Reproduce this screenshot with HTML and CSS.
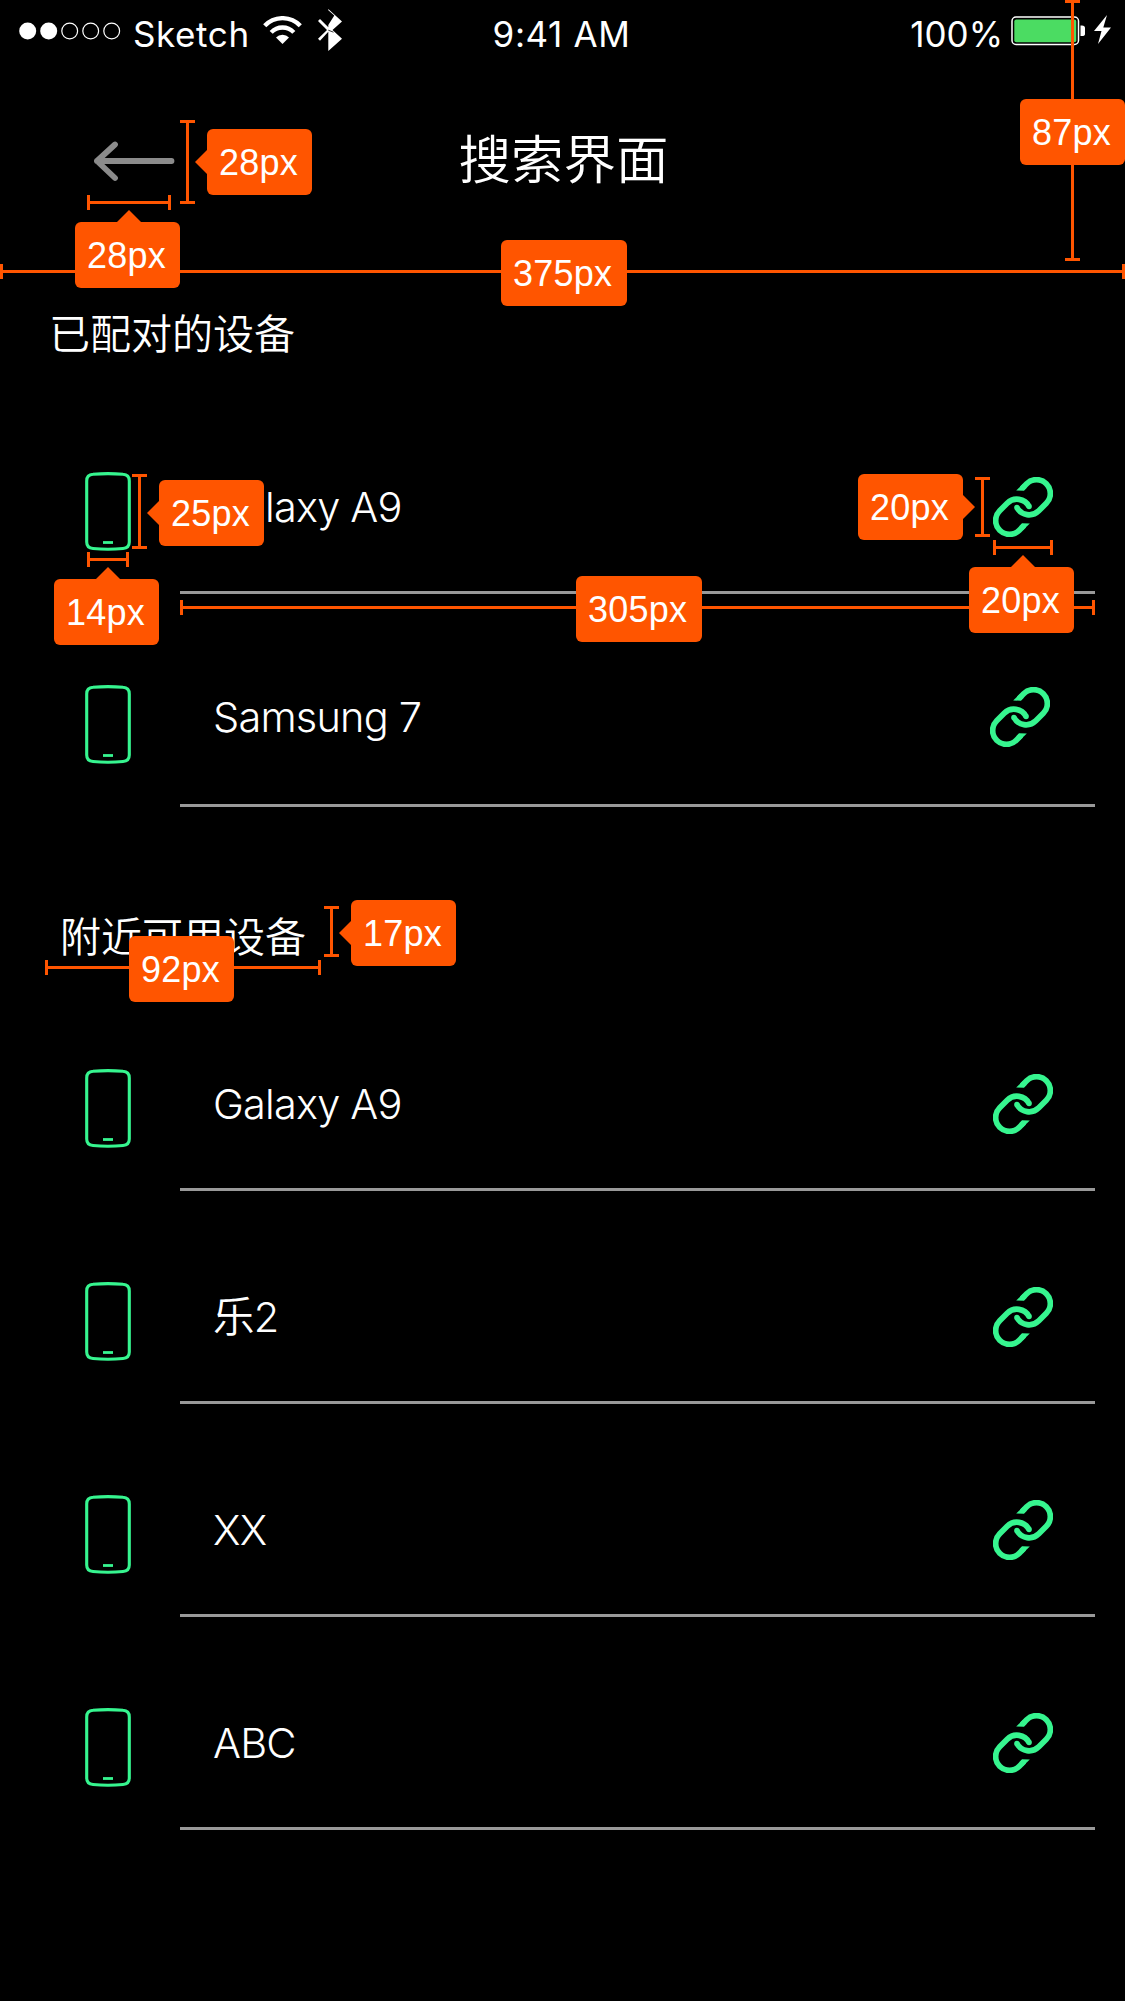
FILE: index.html
```html
<!DOCTYPE html>
<html lang="zh-CN">
<head>
<meta charset="utf-8">
<title>搜索界面</title>
<link rel="stylesheet" href="styles.css">
</head>
<body>
<svg class="sprite" aria-hidden="true">
  <symbol id="phone" viewBox="0 0 46 79">
    <path d="M8 2.3Q23 .9 38 2.3Q44.3 2.6 44.3 9V70Q44.3 76 38 76.5Q23 77.9 8 76.5Q1.7 76 1.700 70V9Q1.700 2.600 8 2.300Z" fill="none" stroke="#36f58f" stroke-width="3.1"/>
    <path d="M18 70.500H28" stroke="#36f58f" stroke-width="2.800"/>
  </symbol>
  <symbol id="link" viewBox="0 0 60 60">
    <g id="link-half">
      <path d="M29 11.400L33.700 6.700A13.850 13.850 0 0 1 53.300 26.300L45.800 33.800A13.850 13.850 0 0 1 23.900 30.500" fill="none" stroke="#36f58f" stroke-width="5.700"/>
      <path d="M23.200 13.500L30.800 13.800L33.800 10.700L29.900 7Z" fill="#36f58f"/>
      <circle cx="23.900" cy="30.500" r="2.700" fill="#36f58f"/>
    </g>
    <use href="#link-half" transform="rotate(180 30 30)"/>
  </symbol>
</svg>
<main class="screen">
  <header class="status">
    <div class="carrier">
      <svg class="dots" width="102" height="18" viewBox="0 0 102 18"><g fill="#fff"><circle cx="8.700" cy="9" r="8.500"/><circle cx="29.700" cy="9" r="8.500"/></g><g fill="none" stroke="#fff" stroke-width="1.200"><circle cx="50.700" cy="9" r="7.900"/><circle cx="71.700" cy="9" r="7.900"/><circle cx="92.700" cy="9" r="7.900"/></g></svg>
      <span class="carrier-name">Sketch</span>
      <svg class="wifi" width="39" height="28" viewBox="0 0 39 28"><path d="M1.700 9.800A24.500 24.500 0 0 1 37.300 9.800M8.200 16.400A15.500 15.500 0 0 1 30.800 16.400" fill="none" stroke="#fff" stroke-width="4.300"/><path d="M13 21.500A9 9 0 0 1 26 21.500L19.500 28Z" fill="#fff"/></svg>
      <svg class="bluetooth" width="24" height="43" viewBox="0 0 24 43"><path d="M10.300 0L24 12.400L14.500 21L24 29.700L10.300 42V22.800L2 31.800L0 29.800L9 21L0 12L2 10L10.300 18.200V16L16.300 6.600L10.300 1.200Z" fill="#fff"/><path d="M10.300 21.200L15.500 23.200" stroke="#000" stroke-width=".8"/></svg>
    </div>
    <time class="clock">9:41 AM</time>
    <div class="power">
      <span class="percent">100%</span>
      <svg class="battery" width="75" height="30" viewBox="0 0 75 30"><rect x="1" y="1" width="66.500" height="27.500" rx="4" fill="none" stroke="#fff" stroke-width="1.500"/><rect x="3.300" y="3.500" width="62" height="22.700" rx="2" fill="#4bdc62"/><path d="M69.500 9.500H71Q74 9.500 74 12V18Q74 20 71 20H69.500Z" fill="#fff"/></svg>
      <svg class="bolt" width="17" height="30" viewBox="0 0 17 30"><path d="M13 0L9.300 12.500H17L4 29L7.500 16H0Z" fill="#fff"/></svg>
    </div>
  </header>
  <nav class="nav">
    <svg class="back" width="82" height="42" viewBox="0 0 82 42"><path d="M78.500 21H4M22 4.500L4 21L22 38" fill="none" stroke="#8b8b8b" stroke-width="5.800" stroke-linecap="round" stroke-linejoin="round"/></svg>
    <h1 class="title">搜索界面</h1>
  </nav>

  <section class="group paired">
    <h2 class="heading">已配对的设备</h2>
    <ul class="list">
      <li class="row"><svg class="phone"><use href="#phone"/></svg><div class="cell"><span class="name">Galaxy A9</span><svg class="link"><use href="#link"/></svg></div></li>
      <li class="row second"><svg class="phone"><use href="#phone"/></svg><div class="cell"><span class="name">Samsung 7</span><svg class="link"><use href="#link"/></svg></div></li>
    </ul>
  </section>

  <section class="group nearby">
    <h2 class="heading">附近可用设备</h2>
    <ul class="list">
      <li class="row"><svg class="phone"><use href="#phone"/></svg><div class="cell"><span class="name">Galaxy A9</span><svg class="link"><use href="#link"/></svg></div></li>
      <li class="row"><svg class="phone"><use href="#phone"/></svg><div class="cell"><span class="name">乐2</span><svg class="link"><use href="#link"/></svg></div></li>
      <li class="row"><svg class="phone"><use href="#phone"/></svg><div class="cell"><span class="name">XX</span><svg class="link"><use href="#link"/></svg></div></li>
      <li class="row"><svg class="phone"><use href="#phone"/></svg><div class="cell"><span class="name">ABC</span><svg class="link"><use href="#link"/></svg></div></li>
    </ul>
  </section>

  <!-- Measurement annotations, floating over the screen -->
  <div class="notes">
    <i class="rule h r-width"></i>
    <i class="rule v r-top"></i>
    <i class="rule v r-back-h"></i>
    <i class="rule h r-back-w"></i>
    <i class="rule v r-phone-h"></i>
    <i class="rule h r-phone-w"></i>
    <i class="rule v r-link-h"></i>
    <i class="rule h r-link-w"></i>
    <i class="rule h r-divider"></i>
    <i class="rule h r-head-w"></i>
    <i class="rule v r-head-h"></i>
    <span class="tag wide t-width">375px</span>
    <span class="tag t-top">87px</span>
    <span class="tag left t-back-h">28px</span>
    <span class="tag up t-back-w">28px</span>
    <span class="tag left t-phone-h">25px</span>
    <span class="tag up t-phone-w">14px</span>
    <span class="tag right t-link-h">20px</span>
    <span class="tag up t-link-w">20px</span>
    <span class="tag wide t-divider">305px</span>
    <span class="tag t-head-w">92px</span>
    <span class="tag left t-head-h">17px</span>
  </div>
</main>
</body>
</html>
```
FILE: styles.css
```css
* { box-sizing: border-box; }
body { margin: 0; background: #000; }
.sprite { position: absolute; width: 0; height: 0; }
.screen {
  position: relative;
  width: 1125px;
  height: 2001px;
  overflow: hidden;
  background: #000;
  color: #fff;
  font-family: Inter, "Noto Sans CJK SC", sans-serif;
  font-weight: 350;
}
svg { display: block; flex: none; }

.status {
  display: grid;
  grid-template-columns: 1fr auto 1fr;
  height: 60px;
  padding: 0 14px 0 19px;
  font-size: 35px;
  font-weight: 400;
  line-height: 42px;
}
.carrier, .power { display: flex; align-items: flex-start; }
.power { justify-content: flex-end; }
.dots { margin-top: 22px; }
.carrier-name { width: 116px; margin: 13px 0 0 12px; letter-spacing: .6px; }
.wifi { margin: 16px 0 0 14px; }
.bluetooth { margin: 9px 0 0 16px; }
.clock { margin-left: -7px; padding-top: 13px; letter-spacing: .6px; }
.percent { padding-top: 13px; }
.battery { margin: 16px 0 0 8px; }
.bolt { margin: 15px 0 0 8px; }

.nav {
  display: grid;
  grid-template-columns: 1fr auto 1fr;
  height: 210px;
  padding-left: 93px;
}
.back { margin-top: 80px; }
.title {
  grid-column: 2;
  margin: 62px 91px 0 0;
  font-size: 52.5px;
  line-height: 76px;
  font-weight: 350;
}

.heading {
  margin: 0;
  font-size: 41px;
  line-height: 60px;
  font-weight: 350;
}
.paired { padding-top: 34px; }
.paired .heading { height: 77px; padding-left: 49px; }
.nearby .heading { height: 171px; padding: 100px 0 0 60px; }
.list { margin: 0; padding: 0; list-style: none; }
.row { display: flex; height: 213px; padding: 0 30px 0 85px; }
.phone { width: 46px; height: 79px; margin: 91px 49px 0 0; }
.cell {
  display: flex;
  flex: 1;
  justify-content: space-between;
  align-items: flex-start;
  border-bottom: 3px solid #999;
  padding: 0 42px 0 33px;
}
.name { margin-top: 101px; font-size: 41.5px; line-height: 50px; letter-spacing: -.8px; }
.link { width: 60px; height: 60px; margin-top: 96px; }
.second .cell { padding-right: 45px; }
.second .name { margin-top: 98px; }
.second .link { margin-top: 93px; }

.notes { position: absolute; inset: 0; }
.rule { position: absolute; display: block; }
.rule.h {
  height: 15px;
  border: solid #ff5500;
  border-width: 0 3px;
  background: linear-gradient(#ff5500, #ff5500) center / 100% 3px no-repeat;
}
.rule.v {
  width: 15px;
  border: solid #ff5500;
  border-width: 3px 0;
  background: linear-gradient(#ff5500, #ff5500) center / 3px 100% no-repeat;
}
.tag {
  position: absolute;
  width: 105px;
  height: 66px;
  padding-left: 12px;
  border-radius: 6px;
  background: #ff5500;
  font: 400 36px/68px "Liberation Sans", sans-serif;
  letter-spacing: .2px;
}
.tag.wide { width: 126px; }
.tag.left::before, .tag.right::before, .tag.up::before {
  content: "";
  position: absolute;
  border: 12px solid transparent;
}
.tag.left::before { left: -24px; top: 21px; border-right-color: #ff5500; }
.tag.right::before { right: -24px; top: 21px; border-left-color: #ff5500; }
.tag.up::before { left: 42px; top: -24px; border-bottom-color: #ff5500; }

.r-width { left: 0; top: 264px; width: 1125px; }
.r-top { left: 1065px; top: 0; height: 261px; }
.r-back-h { left: 180px; top: 120px; height: 84px; }
.r-back-w { left: 87px; top: 195px; width: 84px; }
.r-phone-h { left: 132px; top: 474px; height: 75px; }
.r-phone-w { left: 87px; top: 552px; width: 42px; }
.r-link-h { left: 975px; top: 477px; height: 60px; }
.r-link-w { left: 993px; top: 540px; width: 60px; }
.r-divider { left: 180px; top: 600px; width: 915px; }
.r-head-w { left: 45px; top: 960px; width: 276px; }
.r-head-h { left: 324px; top: 906px; height: 51px; }

.t-width { left: 501px; top: 240px; }
.t-top { left: 1020px; top: 99px; }
.t-back-h { left: 207px; top: 129px; }
.t-back-w { left: 75px; top: 222px; }
.t-phone-h { left: 159px; top: 480px; }
.t-phone-w { left: 54px; top: 579px; }
.t-link-h { left: 858px; top: 474px; }
.t-link-w { left: 969px; top: 567px; }
.t-divider { left: 576px; top: 576px; }
.t-head-w { left: 129px; top: 936px; }
.t-head-h { left: 351px; top: 900px; }
```
